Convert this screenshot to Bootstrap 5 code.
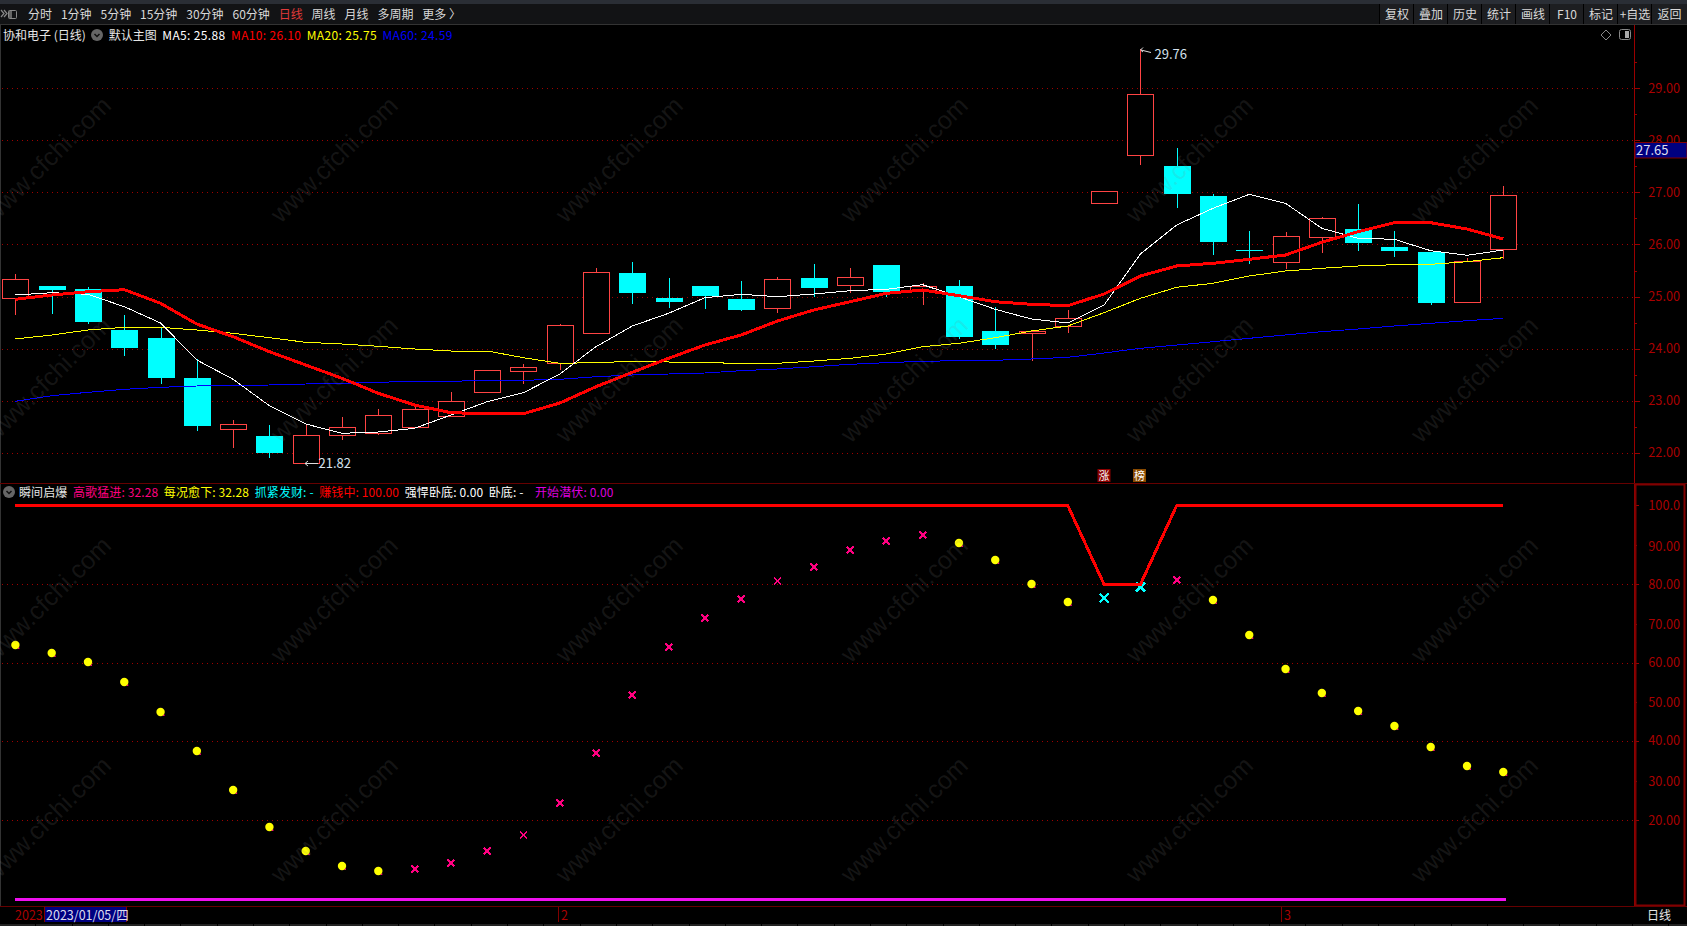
<!DOCTYPE html>
<html lang="zh">
<head>
<meta charset="utf-8">
<title>协和电子 (日线)</title>
<link href="https://cdn.jsdelivr.net/npm/bootstrap@5.3.0/dist/css/bootstrap.min.css" rel="stylesheet">
<style>
html,body{background:#000;margin:0;overflow:hidden}
body{font-family:"Noto Sans CJK SC","Noto Sans",sans-serif;font-size:12px;line-height:1}
.scr{width:1687px;height:926px;background:#000;overflow:hidden}
.scr svg{display:block}
.topband{height:4px;background:#2a2e35}
.tbar{height:21px;background:#121315;border-bottom:1px solid #333;color:#d8d8d8}
.tlinks{gap:8.9px;padding-left:11px}
.tlinks span{cursor:default}
.tlinks .on{color:#e03a3a}
.btn-group>.tbtn{width:35px;height:20px;padding:0;margin:0;flex:none;font-size:12px;line-height:20px;color:#d8d8d8;background:#1d1e21;border:0;border-left:1px solid #000;border-radius:0;white-space:nowrap;font-family:inherit}
.btn-group>.tbtn:not(:first-child){margin-left:0}
.btn-group>.tbtn:hover{color:#d8d8d8;background:#1d1e21}
.btn-group>.tbtn:last-child{width:36px}
.pane{background:linear-gradient(#333,#333) 0 0/1px 100% no-repeat}
.pane-up{height:458px}
.pane-dn{height:424px;border-top:1px solid #600;border-bottom:1px solid #600}
.plot{width:1634px}
.axis{width:53px}
.leg-up{height:20px;padding-left:3px;gap:5.5px;color:#e6e6e6}
.leg-dn{height:16px;padding-left:3px;gap:5.5px;color:#e6e6e6}
.leg-dn span{letter-spacing:.12px}
.leg-dn .cr{margin-right:-1.5px}
.leg-dn .lst{margin-left:6px}
.leg-up .val{letter-spacing:.35px}
.cr{display:inline-block;width:12px;height:12px;flex:none}
.c-w{color:#fff}.c-r{color:#f00}.c-y{color:#ff0}.c-b{color:#00f}.c-p{color:#ff0080}.c-c{color:#0ff}.c-m{color:#f0f}.c-mg{color:#d0d}
.dates{height:17px}
.dates-l{width:1634px}
.dt-y{color:#a00;width:44px;padding-left:15px;line-height:16px;font-size:12.5px}
.dt-chip{width:83px;height:15px;background:#000080;color:#dde;border-left:1px solid #800000;border-right:1px solid #800000;font-size:12.5px;line-height:15px;padding-left:1px;white-space:nowrap}
.dt-m{color:#a00;border-left:1px solid #800000;height:15px;line-height:16px;padding-left:2px;font-size:12.5px}
.dt-m1{margin-left:431px}
.dt-m2{margin-left:713px}
.dt-r{width:53px;color:#e6e6e6;text-align:center;line-height:16px;padding-right:3px}
.bstrip{height:2px;background:repeating-linear-gradient(90deg,#222 0 35.3px,#000 35.3px 36.29px)}
.wm{inset:0;pointer-events:none}
.wm text{font:25.2px "Liberation Sans",sans-serif;fill:rgba(128,128,128,.17)}
.ax-t{font-size:12.7px;fill:#a00}
.tag{font-size:13px;fill:#d5e2ee}
.mk{font-size:11px;fill:#fff}
</style>
</head>
<body>
<div class="scr position-relative d-flex flex-column">
  <div class="topband"></div>
  <nav class="tbar d-flex align-items-center">
    <svg width="17" height="20" viewBox="0 0 17 20"><path d="M1 6l3 3.500-3 3.500M4 6l3 3.500-3 3.500" fill="none" stroke="#888" stroke-width="1.200"/><rect x="8.500" y="6.500" width="8" height="8" rx="1" fill="none" stroke="#888"/><rect x="9" y="7" width="3" height="7" fill="#666"/></svg>
    <div class="tlinks d-flex">
      <span>分时</span><span>1分钟</span><span>5分钟</span><span>15分钟</span><span>30分钟</span><span>60分钟</span><span class="on">日线</span><span>周线</span><span>月线</span><span>多周期</span><span>更多 〉</span>
    </div>
    <div class="btn-group ms-auto">
      <button type="button" class="btn tbtn">复权</button><button type="button" class="btn tbtn">叠加</button><button type="button" class="btn tbtn">历史</button><button type="button" class="btn tbtn">统计</button><button type="button" class="btn tbtn">画线</button><button type="button" class="btn tbtn">F10</button><button type="button" class="btn tbtn">标记</button><button type="button" class="btn tbtn">+自选</button><button type="button" class="btn tbtn">返回</button>
    </div>
  </nav>

  <section class="pane pane-up d-flex">
    <div class="plot d-flex flex-column">
      <div class="leg-up d-flex align-items-center">
        <span>协和电子 (日线)</span>
        <svg class="cr" viewBox="0 0 12 12"><circle cx="6" cy="6" r="6" fill="#666"/><path d="M3.500 5l2.500 2.500L8.500 5" fill="none" stroke="#111" stroke-width="1.500"/></svg>
        <span>默认主图</span>
        <span class="val c-w">MA5: 25.88</span><span class="val c-r">MA10: 26.10</span><span class="val c-y">MA20: 25.75</span><span class="val c-b">MA60: 24.59</span>
        <svg class="ms-auto" width="36" height="14" viewBox="0 0 36 14"><path d="M8 2l5 5-5 5-5-5z" fill="none" stroke="#888"/><rect x="21.500" y="1.500" width="11" height="10" rx="2" fill="none" stroke="#888"/><rect x="27" y="3" width="4" height="7" fill="#aaa"/></svg>
      </div>
      <svg id="up" width="1634" height="438" viewBox="0 45 1634 438"></svg>
    </div>
    <div class="axis">
      <svg id="axu" width="53" height="458" viewBox="1634 25 53 458">
        <text class="ax-t" x="1680" y="92.500" text-anchor="end">29.00</text>
        <text class="ax-t" x="1680" y="144.500" text-anchor="end">28.00</text>
        <text class="ax-t" x="1680" y="196.500" text-anchor="end">27.00</text>
        <text class="ax-t" x="1680" y="248.500" text-anchor="end">26.00</text>
        <text class="ax-t" x="1680" y="301" text-anchor="end">25.00</text>
        <text class="ax-t" x="1680" y="353" text-anchor="end">24.00</text>
        <text class="ax-t" x="1680" y="405" text-anchor="end">23.00</text>
        <text class="ax-t" x="1680" y="457" text-anchor="end">22.00</text>
        <rect x="1635" y="142.500" width="52" height="15.500" fill="#000080" stroke="#800000"/>
        <text x="1636" y="155" font-size="13" fill="#dde">27.65</text>
      </svg>
    </div>
  </section>

  <section class="pane pane-dn d-flex">
    <div class="plot d-flex flex-column">
      <div class="leg-dn d-flex align-items-center">
        <svg class="cr" viewBox="0 0 12 12"><circle cx="6" cy="6" r="6" fill="#666"/><path d="M3.500 5l2.500 2.500L8.500 5" fill="none" stroke="#111" stroke-width="1.500"/></svg>
        <span>瞬间启爆</span>
        <span class="c-p">高歌猛进: 32.28</span><span class="c-y">每况愈下: 32.28</span><span class="c-c">抓紧发财: -</span><span class="c-r">赚钱中: 100.00</span><span class="c-w">强悍卧底: 0.00</span><span class="c-w">卧底: -</span><span class="c-mg lst">开始潜伏: 0.00</span>
      </div>
      <svg id="dn" width="1634" height="406" viewBox="0 500 1634 406"></svg>
    </div>
    <div class="axis">
      <svg id="axd" width="53" height="422" viewBox="1634 484 53 422">
        <rect x="1635.500" y="484.500" width="49" height="421" fill="none" stroke="#800000" stroke-width="2"/>
        <text class="ax-t" x="1680" y="509.500" text-anchor="end">100.0</text>
        <text class="ax-t" x="1680" y="550.500" text-anchor="end">90.00</text>
        <text class="ax-t" x="1680" y="588.500" text-anchor="end">80.00</text>
        <text class="ax-t" x="1680" y="628.500" text-anchor="end">70.00</text>
        <text class="ax-t" x="1680" y="667" text-anchor="end">60.00</text>
        <text class="ax-t" x="1680" y="706.500" text-anchor="end">50.00</text>
        <text class="ax-t" x="1680" y="745" text-anchor="end">40.00</text>
        <text class="ax-t" x="1680" y="786" text-anchor="end">30.00</text>
        <text class="ax-t" x="1680" y="824.500" text-anchor="end">20.00</text>
      </svg>
    </div>
  </section>

  <div class="dates d-flex">
    <div class="dates-l d-flex">
      <span class="dt-y">2023</span><span class="dt-chip">2023/01/05/四</span><span class="dt-m dt-m1">2</span><span class="dt-m dt-m2">3</span>
    </div>
    <div class="dt-r">日线</div>
  </div>
  <div class="bstrip"></div>

  <svg id="wm" class="wm position-absolute" width="1687" height="926" viewBox="0 0 1687 926"></svg>
</div>
<script src="https://cdn.jsdelivr.net/npm/bootstrap@5.3.0/dist/js/bootstrap.bundle.min.js"></script>
<script>
var X0=15.4,DX=36.29,cx=function(i){return X0+DX*i;};
/* candle: [type r/c, bodyTop, bodyBottom, wickTop, wickBottom] */
var C=[['r',279,298,274,315],['c',286,290,286,314],['c',289,322,287,324],['c',330,348,315,356],['c',338,378,328,384],['c',378,426,359,431],['r',424,429,420,448],['c',436,453,425,458],['r',435,463,424,463],['r',427,435,417,440],['r',415,433,409,435],['r',409,427,404,427],['r',401,416,392,416],['r',370,392,370,392],['r',367,371,364,384],['r',325,363,324,370],['r',272,333,268,333],['c',273,293,262,304],['c',298,302,278,308],['c',286,296,286,309],['c',299,310,281,311],['r',279,308,277,313],['c',278,288,264,297],['r',277,285,268,293],['c',265,292,265,297],['r',286,290,283,305],['c',286,337,280,339],['c',331,345,307,349],['r',331,333,331,361],['r',318,326,310,333],['r',191,203,191,203],['r',94,155,49,165],['c',166,194,148,208],['c',196,242,194,255],['c',250,251,231,264],['r',236,262,232,269],['r',218,237,217,253],['c',229,243,204,251],['c',247,251,231,257],['c',252,303,252,305],['r',261,302,258,303],['r',195,249,186,259]];
var MA5=[295,292.7,294.3,306.7,323,360,379.3,405.7,424,433.3,432,428.3,415,401.7,392.7,374,346.7,326,313.3,297.7,294.3,296.7,294,290.7,289.3,284.7,296.7,309.3,319,323,305,254,225,208.3,194.3,203.3,228.3,238.3,239.3,250.7,255.3,250];
var MA10=[299.3,295,291.7,289.7,303.3,324,336.7,351.7,365,378.3,393.3,405,412.7,413.7,413.7,403,386.7,372.3,358.3,345,335,321,310,301.7,293.3,290,295.7,301.7,304.3,305.7,294,276,266,263.3,259.3,255,242.3,231.7,222.7,222.7,229,239];
var MA20=[339,335,330,327.3,327.3,330,333.3,337.7,342.3,344,346.3,349,351,351,357.7,363.3,362.7,361.3,362,362.7,363.3,363.3,361,358.3,354,346.7,343.3,337.7,331,326,312.7,298.3,287.3,283.3,276,271,268.3,266,264.7,264.3,261.7,257.7];
var MA60=[401.3,395.7,392.3,389.3,387.3,386,385.3,385,384,383.3,382.3,381.3,381.3,380.3,380.3,379.3,376.7,375,374,373,370.7,369,366.7,364.3,362.7,361.3,360.7,360.3,359,357.3,353,348.3,345,341.7,338.3,335,331.7,329,326,323.3,320.7,318.3];
var poly=function(a,col,w){return '<polyline shape-rendering="crispEdges" fill="none" stroke="'+col+'" stroke-width="'+w+'" points="'+a.map(function(y,i){return cx(i).toFixed(1)+','+y;}).join(' ')+'"/>';};
var grid=function(ys){return ys.map(function(y){return '<line shape-rendering="crispEdges" x1="2" x2="1634" y1="'+y+'" y2="'+y+'" stroke="#a00000" stroke-dasharray="1 4"/>';}).join('');};
var s=grid([88.5,140.5,192.5,244.5,297.5,349.5,401.5,453.5]);
C.forEach(function(c,i){
  var x=Math.round(cx(i)),col=c[0]=='r'?'#ff4444':'#00ffff';
  s+='<rect shape-rendering="crispEdges" x="'+x+'" y="'+c[3]+'" width="1" height="'+(c[4]-c[3])+'" fill="'+col+'"/>';
  if(c[0]=='r'){ s+='<rect shape-rendering="crispEdges" x="'+(x-13+.5)+'" y="'+(c[1]+.5)+'" width="26" height="'+(c[2]-c[1])+'" fill="#000" stroke="'+col+'"/>';}
  else { s+='<rect shape-rendering="crispEdges" x="'+(x-13)+'" y="'+c[1]+'" width="27" height="'+(c[2]-c[1])+'" fill="'+col+'"/>';}
});
s+=poly(MA60,'#0000ff',1)+poly(MA20,'#ffff00',1)+poly(MA5,'#ffffff',1)+poly(MA10,'#ff0000',3);
s+='<path d="M1141 50l10 2.500M1143 47.500l-2.500 2.500 2.500 2" fill="none" stroke="#ddd"/><text class="tag" x="1154.500" y="59">29.76</text>';
s+='<path d="M305 463.500h13M308 461l-3 2.500 3 2.500" fill="none" stroke="#ddd"/><text class="tag" x="318.500" y="468">21.82</text>';
s+='<rect x="1097.500" y="469" width="13" height="13" fill="#8b0000"/><text class="mk" x="1098.500" y="479.500">涨</text>';
s+='<rect x="1133" y="469" width="13" height="13" fill="#8a4a00"/><text class="mk" x="1134" y="479.500">榜</text>';
document.getElementById('up').innerHTML=s;

/* lower panel: d=dot, x=pink cross, z=cyan cross */
var D=[645,653,662,682,712,751,790,827,851,866,871,869,863,851,835,803,753,695,647,618,599,581,567,550,541,535,543,560,584,602,598,587,580,600,635,669,693,711,726,747,766,772];
var t=grid([584.5,663.5,741.5,820.5]);
D.forEach(function(y,i){
  var x=cx(i),k=(i<=10||(i>=26&&i<=29)||i>=33)?'d':(i==30||i==31)?'z':'x';
  if(k=='d'){t+='<rect x="'+(x+2.4)+'" y="'+(y+2.4)+'" width="1.600" height="1.600" fill="#ff0080"/><circle cx="'+x+'" cy="'+y+'" r="4.2" fill="#ff0"/>';}
  else{var r=k=='z'?4.5:3.5,col=k=='z'?'#0ff':'#ff0080';t+='<path shape-rendering="crispEdges" d="M'+(x-r)+' '+(y-r)+'L'+(x+r)+' '+(y+r)+'M'+(x+r)+' '+(y-r)+'L'+(x-r)+' '+(y+r)+'" stroke="'+col+'" stroke-width="'+(k=='z'?2.4:2)+'"/>';}
});
t+='<polyline shape-rendering="crispEdges" fill="none" stroke="#f00" stroke-width="3" points="15,505.500 '+cx(29).toFixed(1)+',505.500 '+cx(30).toFixed(1)+',584.500 '+cx(31).toFixed(1)+',584.500 '+cx(32).toFixed(1)+',505.500 '+cx(41).toFixed(1)+',505.500"/>';
t+='<rect shape-rendering="crispEdges" x="15" y="898" width="1491" height="3" fill="#f010f0"/>';
document.getElementById('dn').innerHTML=t;

/* axis lines + ticks */
var tk=function(y,l){return '<line shape-rendering="crispEdges" x1="1634" x2="'+(1634+l)+'" y1="'+y+'" y2="'+y+'" stroke="#900"/>';};
var a='<line shape-rendering="crispEdges" x1="1634.500" x2="1634.500" y1="25" y2="483" stroke="#900"/>';
[88.5,140.5,192.5,244.5,297.5,349.5,401.5,453.5].forEach(function(y){a+=tk(y,6);});
[62.5,114.5,166.5,218.5,271.5,323.5,375.5,427.5].forEach(function(y){a+=tk(y,3);});
document.getElementById('axu').insertAdjacentHTML('afterbegin',a);
var b='<line shape-rendering="crispEdges" x1="1634.500" x2="1634.500" y1="484" y2="906" stroke="#900"/>';
[505.5,584.5,663.5,741.5,820.5].forEach(function(y){b+=tk(y,5);});
[545.5,624.5,702.5,781.5].forEach(function(y){b+=tk(y,3);});
document.getElementById('axd').insertAdjacentHTML('afterbegin',b);

/* watermark */
var w='';
[110,396.7,681.7,966.7,1252,1537].forEach(function(ex){[97,317,537,757].forEach(function(ey){
  w+='<text transform="translate('+(ex-116)+' '+(ey+127)+') rotate(-44.500)">www.cfchi.com</text>';
});});
document.getElementById('wm').innerHTML=w;
</script>
</body>
</html>
